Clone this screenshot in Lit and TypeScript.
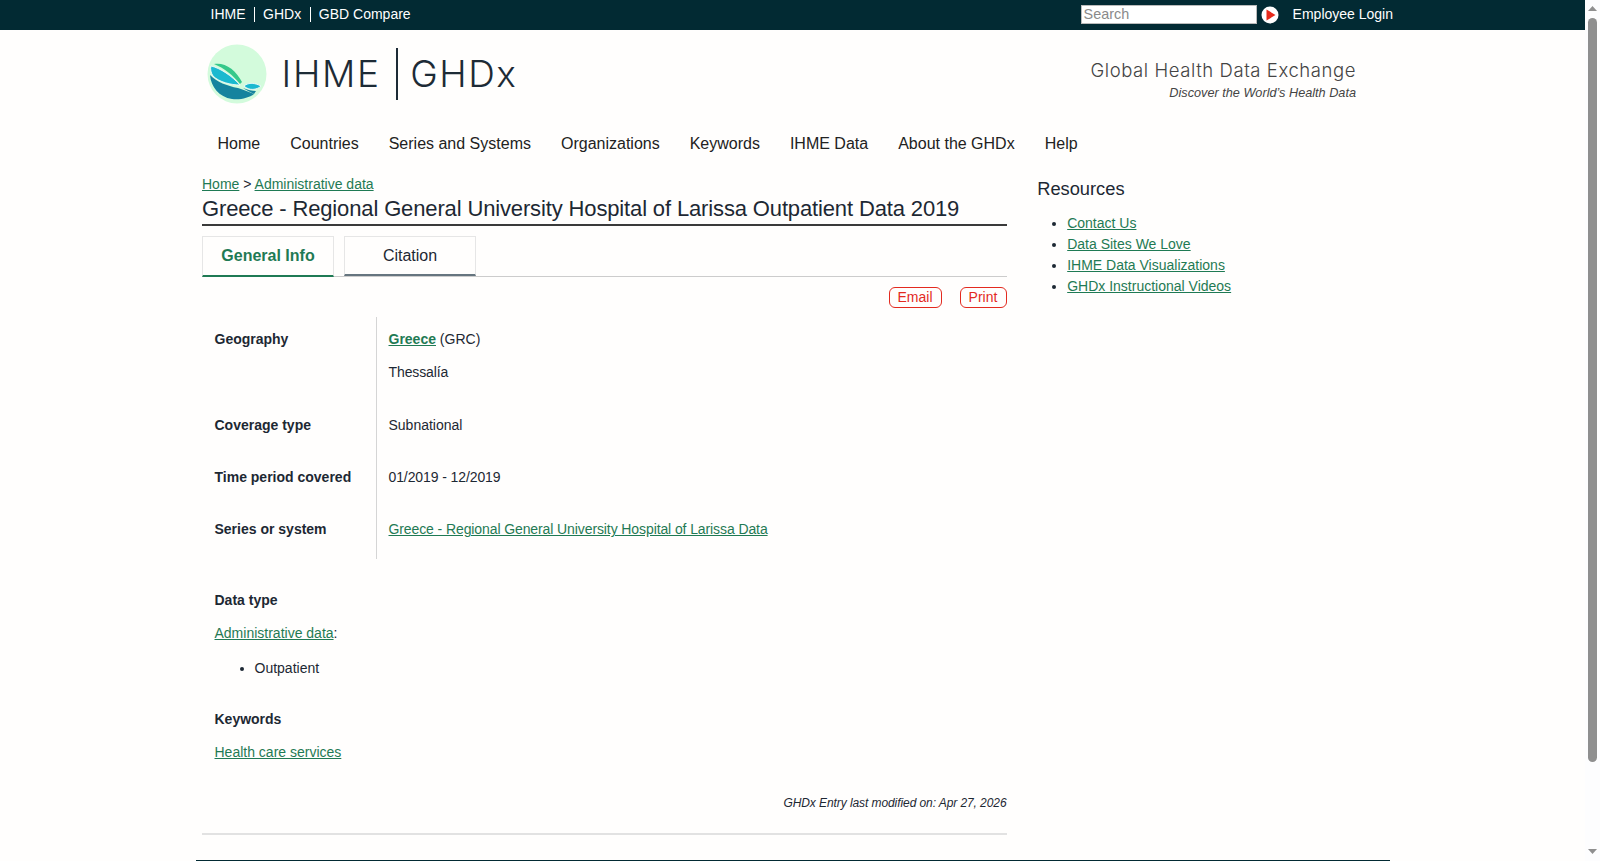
import { LitElement, css, html } from 'lit';
import { customElement } from 'lit/decorators.js';

const NAV = ['Home', 'Countries', 'Series and Systems', 'Organizations', 'Keywords', 'IHME Data', 'About the GHDx', 'Help'];
const RESOURCES = ['Contact Us', 'Data Sites We Love', 'IHME Data Visualizations', 'GHDx Instructional Videos'];

@customElement('app-root')
export class AppRoot extends LitElement {
  static styles = css`
    :host {
      display: flex;
      height: 861px;
      overflow: hidden;
      background: #fffefd;
      color: #1d2833;
      font-family: 'Liberation Sans', Arial, sans-serif;
      font-size: 14px;
      line-height: 20px;
    }
    a {
      color: #1f7a54;
    }
    .page {
      flex: 1;
      min-width: 0;
    }
    .scrollbar {
      flex: none;
      width: 15px;
      height: 861px;
      background: #fdfdfe;
      display: flex;
      flex-direction: column;
      align-items: center;
    }
    .scrollbar svg {
      display: block;
      margin-top: 6px;
    }
    .thumb {
      width: 9px;
      height: 744px;
      margin: 7px 0 87px;
      border-radius: 5px;
      background: #8f8f8f;
    }
    .scrollbar .down {
      margin-top: 0;
    }
    .topbar {
      height: 30px;
      background: #022a33;
      color: #fff;
    }
    .topbar-inner {
      width: 1197.5px;
      margin-left: 195.5px;
      height: 29px;
      display: flex;
      align-items: center;
      justify-content: space-between;
    }
    .toplinks {
      display: flex;
      padding-left: 15px;
    }
    .toplinks span {
      padding: 0 8.3px;
      line-height: 15px;
      border-left: 1px solid #fff;
    }
    .toplinks span:first-child {
      border-left: none;
      padding-left: 0;
    }
    .topright {
      display: flex;
      align-items: center;
      line-height: 15px;
    }
    .search {
      box-sizing: border-box;
      width: 176px;
      height: 19px;
      background: #fff;
      border: 1px solid #bbb;
      color: #8a8a8a;
      font-size: 14.4px;
      padding-left: 2px;
      line-height: 17px;
    }
    .play {
      display: block;
      margin: 0 14px 0 4px;
    }
    .wrap {
      width: 1194px;
      margin: 0 auto;
    }
    .brand {
      box-sizing: border-box;
      height: 89px;
      display: flex;
      align-items: center;
      justify-content: space-between;
      padding: 0 33.5px 2px 11.5px;
    }
    .logo {
      display: flex;
      align-items: center;
      color: #1d2b36;
      font-family: Inter, sans-serif;
      font-weight: 300;
      font-size: 37px;
    }
    .logo svg {
      display: block;
      margin-right: 14.5px;
    }
    .logo .ihme {
      letter-spacing: 1.7px;
    }
    .logo .ghdx {
      letter-spacing: 1.5px;
    }
    .logo .sep {
      width: 2px;
      height: 52px;
      margin: 0 12.5px 0 15px;
      background: #1d2b36;
    }
    .tagline {
      text-align: right;
      padding-top: 14px;
    }
    .tagline b {
      display: block;
      margin-bottom: 2px;
      font-family: Inter, sans-serif;
      font-weight: 300;
      font-size: 18.5px;
      line-height: 24px;
      letter-spacing: 0.57px;
      color: #444;
    }
    .tagline i {
      display: block;
      font-size: 12.7px;
      line-height: 19px;
      color: #444;
    }
    nav {
      display: flex;
      gap: 30px;
      padding: 0 0 0 22px;
      height: 50px;
      align-items: center;
      font-size: 16px;
      color: #222;
    }
    .cols {
      display: flex;
      padding: 5px 0 0 6.5px;
    }
    main {
      width: 804.5px;
      flex: none;
    }
    aside {
      margin-left: 30.7px;
      padding-top: 3px;
    }
    .crumbs {
      height: 20px;
    }
    h1 {
      margin: 0;
      font-weight: 400;
      font-size: 22px;
      letter-spacing: -0.14px;
      line-height: 28px;
      padding: 1px 0 1px;
      border-bottom: 2px solid #3a3a3a;
    }
    .tabs {
      display: flex;
      gap: 10px;
      margin-top: 10px;
      height: 40px;
      border-bottom: 1px solid #ccc;
    }
    .tab {
      box-sizing: border-box;
      width: 132px;
      height: 40px;
      border: 1px solid #e6e6e6;
      border-bottom: 2px solid #66757f;
      text-align: center;
      line-height: 38px;
      font-size: 16px;
    }
    .tab.active {
      height: 41px;
      border-bottom-color: #1f7a54;
      color: #1f7a54;
      font-weight: 700;
    }
    .actions {
      display: flex;
      justify-content: flex-end;
      gap: 18px;
      margin-top: 10px;
    }
    .btn {
      box-sizing: border-box;
      height: 21px;
      text-align: center;
      border: 1px solid #e32a1f;
      border-radius: 6px;
      color: #e32a1f;
      line-height: 19px;
    }
    .btn.email {
      width: 53px;
    }
    .btn.print {
      width: 47px;
    }
    .info {
      display: grid;
      grid-template-columns: 174px 1fr;
      margin: 9px 0 0;
    }
    .info dt {
      padding: 12px 0 20.2px 12.5px;
      font-weight: 700;
    }
    .info dd {
      margin: 0;
      padding: 12px 0 20.2px 11.5px;
      border-left: 1px solid #d5d5d5;
    }
    .info dd p {
      margin: 13px 0 0;
      padding-bottom: 0.6px;
    }
    .info strong a {
      font-weight: 700;
    }
    .info .long {
      letter-spacing: -0.1px;
    }
    .block {
      padding: 30.9px 0 0 12.5px;
    }
    .block h2 {
      margin: 0;
      font-size: 14px;
      line-height: 20px;
    }
    .block p {
      margin: 13px 0 0;
    }
    .block ul {
      margin: 15px 0 0;
      padding-left: 40px;
    }
    .modified {
      margin-top: 31px;
      text-align: right;
      font-size: 12px;
      letter-spacing: -0.08px;
      font-style: italic;
      line-height: 20px;
    }
    .rule {
      margin-top: 20px;
      height: 2px;
      background: #e2e2e2;
    }
    footer {
      margin-top: 25px;
      border-top: 2px solid #022a33;
    }
    aside h3 {
      margin: 0;
      font-weight: 400;
      font-size: 18.3px;
      line-height: 24px;
    }
    aside ul {
      margin: 12px 0 0;
      padding-left: 30px;
    }
    aside li {
      height: 21px;
      line-height: 21px;
    }
  `;

  render() {
    return html`
      <div class="page">
        <div class="topbar">
          <div class="topbar-inner">
            <div class="toplinks"><span>IHME</span><span>GHDx</span><span>GBD Compare</span></div>
            <div class="topright">
              <div class="search">Search</div>
              <svg class="play" width="18" height="18" viewBox="0 0 18 18">
                <circle cx="9" cy="9" r="8.5" fill="#fff"></circle>
                <path d="M5.5 3.5 L14.5 9 L5.5 14.5 Z" fill="#e62a1b"></path>
              </svg>
              <span>Employee Login</span>
            </div>
          </div>
        </div>
        <div class="wrap">
          <div class="brand">
            <div class="logo">
              <svg width="60" height="60" viewBox="0 0 60 60">
                <circle cx="30" cy="30" r="29.5" fill="#d3fbdc"></circle>
                <path d="M3 31 C10 38 20 42 31 44 C37 46 42 48 47 50 C42 54 33 56 25 55 C12 53 4 43 3 31 Z" fill="#15839e"></path>
                <path d="M36 44 C41 46 45 47 49 47 L47 50 C43 48 39 46 36 44 Z" fill="#15839e"></path>
                <path d="M4 22 C13 24 25 32 33 41 C24 41 12 38 6 32 C4 29 3 25 4 22 Z" fill="#1ab9cf" stroke="#fff" stroke-width="0.8"></path>
                <path d="M7 20 C18 18 29 26 35 38 L33 40 C26 31 17 24 7 20 Z" fill="#35c88a"></path>
                <path d="M37 42 C42 38 48 39 54 42 C50 46 42 47 37 42 Z" fill="#1ab9cf" stroke="#fff" stroke-width="0.8"></path>
              </svg>
              <span class="ihme">IHME</span><span class="sep"></span><span class="ghdx">GHDx</span>
            </div>
            <div class="tagline">
              <b>Global Health Data Exchange</b>
              <i>Discover the World’s Health Data</i>
            </div>
          </div>
          <nav>${NAV.map((n) => html`<span>${n}</span>`)}</nav>
          <div class="cols">
            <main>
              <div class="crumbs"><a href="#">Home</a> &gt; <a href="#">Administrative data</a></div>
              <h1>Greece - Regional General University Hospital of Larissa Outpatient Data 2019</h1>
              <div class="tabs">
                <div class="tab active">General Info</div>
                <div class="tab">Citation</div>
              </div>
              <div class="actions">
                <span class="btn email">Email</span>
                <span class="btn print">Print</span>
              </div>
              <dl class="info">
                <dt>Geography</dt>
                <dd><strong><a href="#">Greece</a></strong> (GRC)<p class="long">Thessalía</p></dd>
                <dt>Coverage type</dt>
                <dd>Subnational</dd>
                <dt>Time period covered</dt>
                <dd class="long">01/2019 - 12/2019</dd>
                <dt>Series or system</dt>
                <dd><a class="long" href="#">Greece - Regional General University Hospital of Larissa Data</a></dd>
              </dl>
              <div class="block">
                <h2>Data type</h2>
                <p><a href="#">Administrative data</a>:</p>
                <ul><li>Outpatient</li></ul>
              </div>
              <div class="block">
                <h2>Keywords</h2>
                <p><a href="#">Health care services</a></p>
              </div>
              <div class="modified">GHDx Entry last modified on: Apr 27, 2026</div>
              <div class="rule"></div>
            </main>
            <aside>
              <h3>Resources</h3>
              <ul>${RESOURCES.map((r) => html`<li><a href="#">${r}</a></li>`)}</ul>
            </aside>
          </div>
          <footer></footer>
        </div>
      </div>
      <div class="scrollbar">
        <svg width="9" height="5" viewBox="0 0 9 5"><path d="M4.5 0 L9 5 L0 5 Z" fill="#8f8f8f"></path></svg>
        <div class="thumb"></div>
        <svg class="down" width="9" height="5" viewBox="0 0 9 5"><path d="M0 0 L9 0 L4.5 5 Z" fill="#8f8f8f"></path></svg>
      </div>
    `;
  }
}
